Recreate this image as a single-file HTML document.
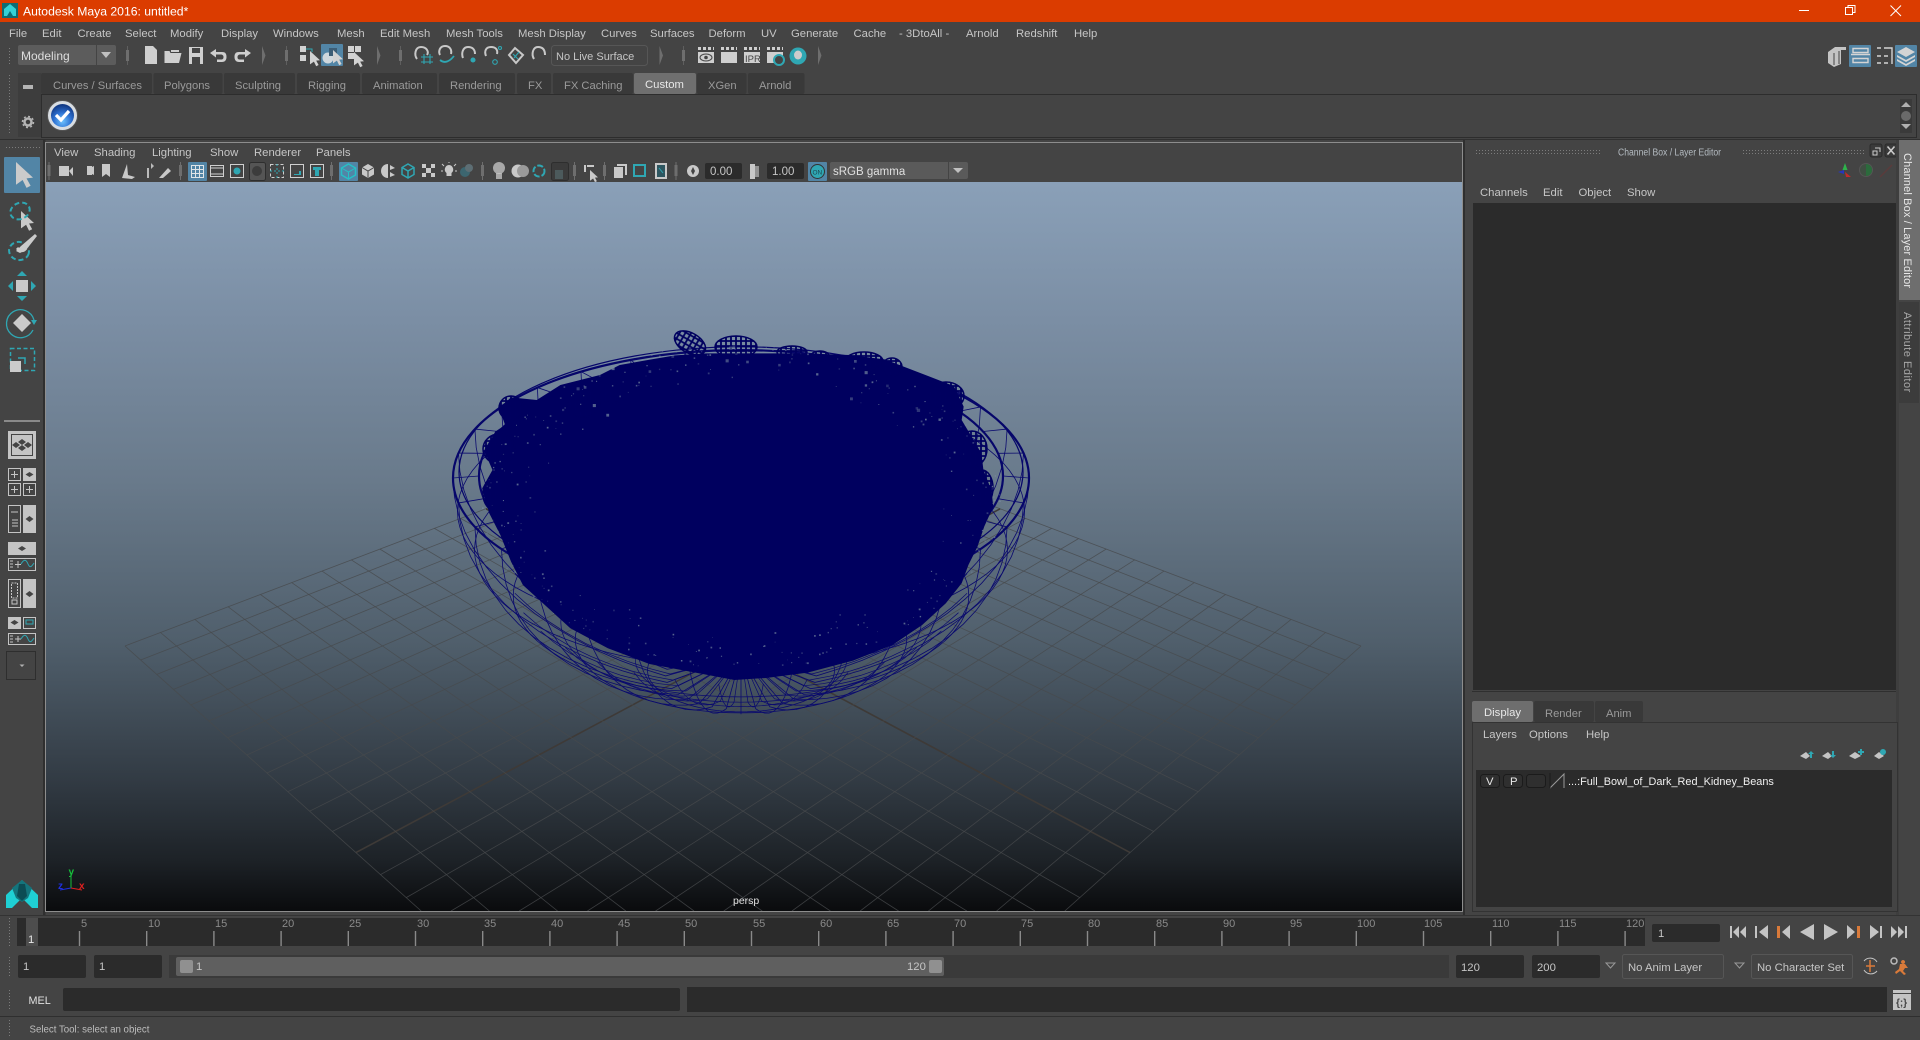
<!DOCTYPE html>
<html lang="en"><head><meta charset="utf-8"><title>Autodesk Maya 2016: untitled*</title>
<style>
html,body{margin:0;padding:0;background:#444;width:1920px;height:1040px;overflow:hidden}
svg{display:block}
text{font:11.3px "Liberation Sans",sans-serif;fill:#c6c6c6}
.d{fill:#9a9a9a;font-size:11.200px}
.n{fill:#8a8a8a;font-size:11px}
.w{fill:#e8e8e8}
</style></head><body>
<svg xmlns="http://www.w3.org/2000/svg" width="1920" height="1040" viewBox="0 0 1920 1040">
<defs>
<linearGradient id="sky" gradientUnits="userSpaceOnUse" x1="0" y1="182" x2="0" y2="911">
<stop offset="0" stop-color="#8aa0b8"/><stop offset=".19" stop-color="#7b8ea4"/><stop offset=".41" stop-color="#697a8b"/><stop offset=".63" stop-color="#505f6c"/><stop offset=".82" stop-color="#323b44"/><stop offset=".93" stop-color="#1d2227"/><stop offset="1" stop-color="#0a0b0d"/>
</linearGradient>
<pattern id="dots" width="3" height="3" patternUnits="userSpaceOnUse"><rect width="1" height="1" fill="#7c7c7c"/></pattern>
<pattern id="hatch" width="5" height="5" patternUnits="userSpaceOnUse"><path d="M0 1H5M1 0V5" stroke="#00005f" stroke-width="1.800"/></pattern>
<radialGradient id="chk" cx=".5" cy=".75" r=".7"><stop offset="0" stop-color="#6ec2ff"/><stop offset=".55" stop-color="#2c6fd0"/><stop offset="1" stop-color="#123a86"/></radialGradient>
<clipPath id="vp"><rect x="46" y="182" width="1416" height="729"/></clipPath>
<path id="arw" d="M0 0L10 9.2 6.2 9.6 8.6 14 6.2 15.2 3.9 10.6 0 13.4Z"/>
</defs>

<rect width="1920" height="1040" fill="#444"/>
<!-- title -->
<rect width="1920" height="22" fill="#db3c00"/>
<rect x="2" y="3" width="16" height="15" fill="#0d6d74"/><path d="M4 16V9L10 4 16 9V16H13L10 11 7 16Z" fill="#35d2d6"/>
<text x="23" y="15.500" style="font-size:12.200px;fill:#fff">Autodesk Maya 2016: untitled*</text>
<path d="M1799 10.500H1809" stroke="#fff"/><path d="M1845.500 7.500h7v7h-7zM1848 7.500v-2h7v7h-2.500" fill="none" stroke="#fff"/><path d="M1890.500 5.500l10.500 10.500M1901 5.500l-10.500 10.500" stroke="#fff"/>

<!-- menu -->
<g>
<text x="9" y="37">File</text><text x="42" y="37">Edit</text><text x="77.500" y="37">Create</text><text x="125" y="37">Select</text><text x="170" y="37">Modify</text><text x="221" y="37">Display</text><text x="273" y="37">Windows</text><text x="337" y="37">Mesh</text><text x="380" y="37">Edit Mesh</text><text x="446" y="37">Mesh Tools</text><text x="518" y="37">Mesh Display</text><text x="601" y="37">Curves</text><text x="650" y="37">Surfaces</text><text x="708.500" y="37">Deform</text><text x="761" y="37">UV</text><text x="791" y="37">Generate</text><text x="853.500" y="37">Cache</text><text x="899" y="37">- 3DtoAll -</text><text x="966" y="37">Arnold</text><text x="1016" y="37">Redshift</text><text x="1074" y="37">Help</text>
</g>

<!-- status toolbar -->
<rect x="7" y="46" width="5" height="20" fill="url(#dots)"/>
<rect x="18" y="45" width="98" height="20" rx="2" fill="#5c5c5c"/><rect x="96" y="45" width="1" height="20" fill="#444"/>
<text x="21" y="60" style="font-size:12px;fill:#ddd">Modeling</text><path d="M101 52h10l-5 6z" fill="#c0c0c0"/>
<g fill="#5f5f5f"><rect x="127" y="46" width="1" height="19"/><rect x="286" y="46" width="1" height="19"/><rect x="400" y="46" width="1" height="19"/><rect x="683" y="46" width="1" height="19"/>
<rect x="126" y="50" width="3" height="11" fill="#6e6e6e"/><rect x="285" y="50" width="3" height="11" fill="#6e6e6e"/><rect x="399" y="50" width="3" height="11" fill="#6e6e6e"/><rect x="682" y="50" width="3" height="11" fill="#6e6e6e"/>
<path d="M262 46l3.500 9.500-3.500 9.500zM377 46l3.500 9.500-3.500 9.500zM659.500 46l3.500 9.500-3.500 9.500zM818 46l3.500 9.500-3.500 9.500z" fill="#6e6e6e"/></g>
<g fill="#cfcfcf">
<path d="M145 46h8l4 4v14h-12z"/>
<path d="M164.500 51h5l1 2h11l-2.500 10h-14.500zM171 50h8v2h-8z"/>
<path d="M189 47h14v17h-14zM192 48v5h8v-5zM192 57v7h8v-7z" fill-rule="evenodd"/><rect x="197" y="59" width="2" height="3" fill="#444"/>
<path d="M216 49v3h6c4 0 4.500 2.500 4.500 5 0 3-1.500 5-4.500 5h-5v-2.500h4c2 0 2.500-1 2.500-2.500s-1-2.500-3-2.500h-4.500v3l-6-4.500z"/>
<path d="M245 49v3h-6c-4 0-4.500 2.500-4.500 5 0 3 1.500 5 4.500 5h5v-2.500h-4c-2 0-2.500-1-2.500-2.500s1-2.500 3-2.500h4.500v3l6-4.500z"/>
</g>
<!-- select mode -->
<rect x="321" y="44" width="22" height="22" rx="1" fill="#5285a6"/>
<g fill="#d2d2d2">
<rect x="300" y="46" width="6" height="6"/><rect x="300" y="55" width="6" height="6"/><use href="#arw" x="310" y="51"/>
<circle cx="328" cy="58" r="5.500" fill="#cfd7dc"/><path d="M329 48h8v8h-8z" fill="#3d5e76"/><use href="#arw" x="333" y="50"/>
<path d="M348 46h6v6h-6zM355 46h6v6h-6zM348 53h6v6h-6z"/><use href="#arw" x="354" y="52"/>
</g>
<path d="M306 49h6v3" fill="none" stroke="#2fa7b3"/>
<!-- snap icons -->
<g fill="none" stroke="#c8c8c8" stroke-width="2">
<path d="M417 59c-3-4-2-12 4-12s8 5 6 8"/><path d="M440 55c-2-4 0-9 5-9s7 4 6 8"/><path d="M463 58c-2-5 0-11 5-11s7 3 7 7"/><path d="M486 56c-2-5 0-9 5-9s7 3 6 7"/><path d="M509 55l6-7 8 7-7 8z"/><path d="M534 59c-3-5-1-12 4-12s7 3 7 8"/>
</g>
<g fill="none" stroke="#2fa7b3" stroke-width="1.100">
<path d="M424 54v10M430 54v10M421 57h12M421 62h12"/><path d="M440 60c5 4 10 1 14-4" stroke-width="1.800"/><circle cx="473" cy="60" r="2" fill="#2fa7b3"/><circle cx="495" cy="62" r="2.300"/><circle cx="500" cy="48" r="1.500"/><path d="M513 54l5 5M519 52l-5 6"/>
</g>
<rect x="551.500" y="45.500" width="96" height="20" rx="3" fill="#444" stroke="#565656"/>
<text x="556" y="60" style="font-size:11px">No Live Surface</text>
<!-- render -->
<g fill="#cfcfcf">
<rect x="698" y="52" width="16" height="11"/><rect x="721" y="52" width="16" height="11"/><rect x="744" y="52" width="16" height="11"/><rect x="767" y="52" width="16" height="11"/>
<path d="M698 47h3v3h-3zM703 47h3v3h-3zM708 47h3v3h-3zM713 47h1v3h-1zM721 47h3v3h-3zM726 47h3v3h-3zM731 47h3v3h-3zM736 47h1v3h-1zM744 47h3v3h-3zM749 47h3v3h-3zM754 47h3v3h-3zM759 47h1v3h-1zM767 47h3v3h-3zM772 47h3v3h-3zM777 47h3v3h-3zM782 47h1v3h-1z"/>
</g>
<ellipse cx="706" cy="57.500" rx="6" ry="3.500" fill="none" stroke="#444"/><circle cx="706" cy="57.500" r="1.800" fill="#444"/>
<text x="745" y="62" style="font-size:9.500px;fill:#444">IPR</text>
<circle cx="779" cy="60" r="5" fill="#444" stroke="#2fa7b3" stroke-width="2"/>
<circle cx="798" cy="56" r="8.500" fill="#2fa7b3"/><ellipse cx="798" cy="55" rx="4" ry="4.500" fill="#ccc"/>
<!-- right status icons -->
<rect x="1849" y="45" width="22" height="22" rx="1" fill="#5285a6"/><rect x="1895" y="45" width="22" height="22" rx="1" fill="#5285a6"/>
<path d="M1828 52l7-5h11v3h-5v14l-7 3-6-4z" fill="#c4c4c4"/><path d="M1834 53v12M1839 51v13" stroke="#444"/>
<g fill="none" stroke="#d4d4d4" stroke-width="1.400"><path d="M1853 48.500h15v4h-15zM1853 58.500h15v4h-15zM1851 54.500h19"/><path d="M1877 48h4M1877 56h4M1877 63h4M1884 48h8v16M1884 56h4M1884 63h4"/></g>
<path d="M1906 47l9 5-9 5-9-5zM1897 55l9 5 9-5v2l-9 5-9-5zM1897 59l9 5 9-5v2l-9 5-9-5z" fill="#d4d4d4"/>

<!-- shelf -->
<rect x="7" y="74" width="5" height="60" fill="url(#dots)"/>
<rect x="18" y="73" width="23" height="64" fill="#3d3d3d"/>
<rect x="23" y="85" width="10" height="4" fill="#b4b4b4"/>
<circle cx="28" cy="122" r="3.500" fill="none" stroke="#b4b4b4" stroke-width="2.500"/><circle cx="28" cy="122" r="5.500" fill="none" stroke="#b4b4b4" stroke-width="1.500" stroke-dasharray="2 2.300"/>
<g fill="#393939">
<rect x="41" y="73" width="111" height="21" rx="2"/><rect x="153.500" y="73" width="69" height="21" rx="2"/><rect x="224" y="73" width="71" height="21" rx="2"/><rect x="297" y="73" width="63" height="21" rx="2"/><rect x="362" y="73" width="75" height="21" rx="2"/><rect x="439" y="73" width="76" height="21" rx="2"/><rect x="517" y="73" width="34" height="21" rx="2"/><rect x="553" y="73" width="80" height="21" rx="2"/><rect x="697" y="73" width="49.500" height="21" rx="2"/><rect x="748" y="73" width="56.500" height="21" rx="2"/>
</g>
<rect x="634" y="73" width="62" height="21" rx="2" fill="#6f6f6f"/>
<g class="g">
<text class="d" x="53" y="89">Curves / Surfaces</text><text class="d" x="164" y="89">Polygons</text><text class="d" x="235" y="89">Sculpting</text><text class="d" x="308" y="89">Rigging</text><text class="d" x="373" y="89">Animation</text><text class="d" x="450" y="89">Rendering</text><text class="d" x="528" y="89">FX</text><text class="d" x="564" y="89">FX Caching</text><text class="w" x="645" y="88">Custom</text><text class="d" x="708" y="89">XGen</text><text class="d" x="759" y="89">Arnold</text>
</g>
<rect x="41.500" y="94.500" width="1875" height="43" fill="#444" stroke="#2d2d2d"/>
<circle cx="62.500" cy="115.500" r="15" fill="#d8dde2" stroke="#555"/><circle cx="62.500" cy="115.500" r="11.500" fill="url(#chk)"/><path d="M56 115l5 5 8-9" fill="none" stroke="#fff" stroke-width="3.200"/>
<rect x="1900" y="99" width="12" height="34" fill="#3a3a3a"/><path d="M1901 107l5-5 5 5zM1901 124l5 5 5-5z" fill="#b0b0b0"/><circle cx="1906" cy="116" r="5" fill="#6a6a6a"/>
<rect x="0" y="139" width="1920" height="1" fill="#303030"/>

<!-- left tools -->
<rect x="4" y="147" width="36" height="1" fill="url(#dots)"/><rect x="4" y="149" width="36" height="1" fill="url(#dots)"/>
<rect x="43" y="140" width="2.500" height="775" fill="#2f2f2f"/>
<rect x="4" y="157" width="36" height="36" rx="1" fill="#5285a6"/>
<use href="#arw" x="0" y="0" transform="translate(16 162) scale(1.700)" fill="#cbcbcb"/>
<use href="#arw" transform="translate(21 211) scale(1.300)" fill="#c9c9c9"/>
<g fill="none" stroke="#2fa7b3" stroke-width="2" stroke-dasharray="5 3">
<ellipse cx="20" cy="211" rx="10" ry="8" transform="rotate(-25 20 211)"/>
<ellipse cx="19" cy="251" rx="10" ry="9" transform="rotate(15 19 251)"/>
<rect x="10.500" y="348.500" width="24" height="22" stroke-dasharray="4 2.500" stroke-width="1.500"/>
</g>
<path d="M35 234l2 2-11 14-6 3-4-2 5-5z" fill="#cbcbcb"/><path d="M17 248c4 4 7 3 9 0" stroke="#cbcbcb" stroke-width="3" fill="none"/>
<rect x="16" y="280" width="12" height="12" fill="#c9c9c9"/><g fill="#2fa7b3"><path d="M22 271l5 5h-10zM22 301l5-5h-10zM8 286l5-5v10zM36 286l-5-5v10z"/></g>
<path d="M22 314l9 9-9 9-9-9z" fill="#cbcbcb"/><path d="M33 330a14 14 0 1 1 1-10" fill="none" stroke="#2fa7b3" stroke-width="1.300"/><path d="M31 320h6l-3 5z" fill="#2fa7b3"/>
<rect x="10" y="361" width="11" height="11" fill="#cbcbcb"/><path d="M18 358h7v6" fill="none" stroke="#2fa7b3" stroke-width="1.500"/>
<rect x="4" y="420" width="36" height="2" fill="#8a8a8a"/>
<rect x="8" y="431" width="28" height="28" fill="#c4c4c4"/><rect x="11.500" y="434.500" width="21" height="21" fill="none" stroke="#444"/>
<path d="M22 439l4 3-4 3-4-3zM22 445l4 3-4 3-4-3zM16 442l4 3-4 3-4-3zM28 442l4 3-4 3-4-3z" fill="#444"/>
<g fill="none" stroke="#c4c4c4"><rect x="8.500" y="468.500" width="12" height="12"/><rect x="8.500" y="483.500" width="12" height="12"/><rect x="23.500" y="483.500" width="12" height="12"/><path d="M11 474.500h7M14.500 471v7M11 489.500h7M14.500 486v7M26 489.500h7M29.500 486v7"/><rect x="8.500" y="505.500" width="12" height="27"/><path d="M11 512h7M12 520h6M12 523h6M12 526h6"/><rect x="8.500" y="558.500" width="27" height="12"/><path d="M10 561h3M10 564h3M10 567h3M15 564.500h6M18 561v7"/><rect x="8.500" y="579.500" width="12" height="28"/><rect x="11.500" y="583" width="6" height="15" fill="none" stroke-dasharray="2 1"/><rect x="12" y="600" width="5" height="4"/><rect x="23.500" y="617.500" width="12" height="11"/><rect x="8.500" y="633.500" width="27" height="11"/><path d="M10 636h3M10 639h3M10 642h3M15 639h6M18 636v6"/></g>
<path d="M21 564c3-5 5-5 7 0s4 2 6-1M21 639c3-5 5-5 7 0s4 2 6-1" fill="none" stroke="#2fa7b3"/>
<rect x="26" y="620" width="7" height="4" fill="none" stroke="#2fa7b3"/>
<g fill="#c4c4c4"><rect x="23" y="468" width="13" height="13"/><rect x="23" y="505" width="13" height="28"/><rect x="8" y="542" width="28" height="13"/><rect x="23" y="579" width="13" height="29"/><rect x="8" y="617" width="13" height="12"/></g>
<path d="M29.500 472l4 2.500-4 2.500-4-2.500zM29.500 516l4 3-4 3-4-3zM22 546l4 2.500-4 2.500-4-2.500zM29.500 591l4 3-4 3-4-3zM14.500 620l4 2.500-4 2.500-4-2.500z" fill="#444"/>
<rect x="6.500" y="651.500" width="29" height="28" fill="none" stroke="#2e2e2e"/><path d="M19.500 664.500h5l-2.500 2.500z" fill="#b0b0b0"/>
<!-- Maya logo -->
<path d="M6 895l16-15 16 15v13h-6l-10-10-10 10h-6z" fill="#1fd0d4"/><path d="M12 888l10-8 10 8-4 10-6 4-6-4z" fill="#14747c"/><path d="M19 884h6l2 12-5 5-5-5z" fill="#0c4c54"/>

<!-- viewport panel -->
<rect x="45.500" y="142.500" width="1417" height="769" fill="#444" stroke="#8d8d8d"/>
<text x="54" y="156">View</text><text x="94" y="156">Shading</text><text x="152" y="156">Lighting</text><text x="210" y="156">Show</text><text x="254" y="156">Renderer</text><text x="316" y="156">Panels</text>
<g fill="#6e6e6e"><rect x="48.500" y="162" width="1" height="18"/><rect x="180" y="162" width="1" height="18"/><rect x="331" y="162" width="1" height="18"/><rect x="482" y="162" width="1" height="18"/><rect x="574" y="162" width="1" height="18"/><rect x="604" y="162" width="1" height="18"/><rect x="675.500" y="162" width="1" height="18"/>
<rect x="47.500" y="165" width="3" height="11"/><rect x="179" y="165" width="3" height="11"/><rect x="330" y="165" width="3" height="11"/><rect x="481" y="165" width="3" height="11"/><rect x="573" y="165" width="3" height="11"/><rect x="603" y="165" width="3" height="11"/><rect x="674.500" y="165" width="3" height="11"/></g>
<rect x="188" y="162" width="19" height="19" rx="1" fill="#5285a6"/><rect x="339" y="162" width="19" height="19" rx="1" fill="#5285a6"/><rect x="808" y="162" width="19" height="19" rx="1" fill="#5285a6"/>
<rect x="249.500" y="162.500" width="16" height="18" rx="2" fill="#555" stroke="#2e2e2e"/><rect x="551.500" y="162.500" width="17" height="18" rx="2" fill="#3b3b3b" stroke="#2e2e2e"/>
<g fill="#c9c9c9">
<rect x="59" y="166" width="10" height="10"/><path d="M69 171l4-4v9z"/>
<rect x="87" y="166" width="5" height="9"/><path d="M92 167l2-1v9l-2-1z"/>
<path d="M102 164h8v13l-4-3-4 3z"/>
<path d="M122 178l5-14 1 11 7 2-3 2z"/>
<path d="M151 163l3 3-3 3zM147 168h2v10h-2z" opacity=".9"/>
<path d="M159 178l9-10 3 3-8 7z"/>
<path d="M368 164l6 3.500v7l-6 3.500-6-3.500v-7z"/><path d="M388 164a7 7 0 0 0 0 14z"/><path d="M390 165l5 3-5 2zM390 172l5 3-5 2z"/>
<path d="M422 164h4v4h-4zM431 164h4v4h-4zM426 168h5v5h-5zM422 173h4v4h-4zM431 173h4v4h-4z"/>
<path d="M449 165a4.500 4.500 0 0 1 2.500 8v3h-5v-3a4.500 4.500 0 0 1 2.500-8z"/><path d="M443 171h-2M457 171h-2M444 166l-2-2M454 166l2-2M449 163v-1" stroke="#c9c9c9"/>
<circle cx="499" cy="168" r="6" opacity=".75"/><rect x="496" y="173" width="6" height="6" opacity=".75"/><circle cx="518" cy="171" r="6.500"/><circle cx="523" cy="171" r="6" fill="#9a9a9a"/>
<path d="M587 165h7v2h-7zM584 165h2v7h-2z"/><use href="#arw" transform="translate(590 170) scale(.8)"/>
<path d="M614 167h9v11h-9zM617 164h10v11h-2v-9h-8z" fill-rule="evenodd"/>
<rect x="655" y="163" width="12" height="16"/><path d="M750 164h5v15h-5z"/><path d="M755 166h4v11h-4z" opacity=".6"/>
<circle cx="693" cy="171" r="6"/>
</g>
<path d="M368 170.500v7M362 167.500l6 3.500 6-3.500" fill="none" stroke="#444"/>
<rect x="634" y="165" width="11" height="11" fill="none" stroke="#2fa7b3" stroke-width="2"/><rect x="657" y="165" width="8" height="12" fill="#2e5660"/><path d="M659 168l4 5" stroke="#2fa7b3"/>
<path d="M693 167l2 4-2 4-2-4z" fill="#444"/>
<g fill="none" stroke="#dfe5e8"><rect x="191.500" y="165.500" width="12" height="12"/><path d="M195.500 165v13M199.500 165v13M191 169.500h13M191 173.500h13"/></g>
<g fill="none" stroke="#cfcfcf"><rect x="210.500" y="165.500" width="13" height="11"/><path d="M211 168h12M211 174h12"/><rect x="230.500" y="164.500" width="13" height="13"/><rect x="270.500" y="164.500" width="13" height="13" stroke-dasharray="3 2"/><path d="M270 171h14M277 164v14" stroke="#2fa7b3" stroke-dasharray="2 2"/><rect x="290.500" y="164.500" width="13" height="13"/><rect x="310.500" y="164.500" width="13" height="13"/></g>
<circle cx="237" cy="171" r="3.500" fill="#2fa7b3"/><circle cx="257" cy="171" r="5" fill="#3c3c3c"/>
<path d="M294 174h5v-3h2v4h-7z" fill="#2fa7b3"/><path d="M313 167h8v3h-2v6h-4v-6h-2z" fill="#2fa7b3"/>
<path d="M348.500 164l7 4v7l-7 4-7-4v-7z" fill="none" stroke="#26c0c6" stroke-width="1.500"/><path d="M341.500 168l7 4 7-4M348.500 172v7" fill="none" stroke="#26c0c6"/>
<path d="M408 164l6 3.500v7l-6 3.500-6-3.500v-7zM402 167.500l6 3.500 6-3.500M408 171v7" fill="none" stroke="#2fa7b3" stroke-width="1.500"/>
<circle cx="465" cy="172" r="5" fill="#3c6670"/><circle cx="469" cy="168" r="4" fill="#5d6e74"/>
<circle cx="539" cy="171" r="5.500" fill="none" stroke="#2fa7b3" stroke-width="2" stroke-dasharray="6 2"/>
<rect x="555" y="170" width="8" height="9" fill="#4c5a5c"/>
<rect x="705" y="163" width="37" height="16" rx="2" fill="#2b2b2b"/><text x="710" y="175" style="font-size:11.500px">0.00</text>
<rect x="767" y="163" width="37" height="16" rx="2" fill="#2b2b2b"/><text x="772" y="175" style="font-size:11.500px">1.00</text>
<circle cx="817.500" cy="171.500" r="7" fill="#2fa7b3" stroke="#333"/><text x="812.500" y="174.500" style="font-size:6.500px;fill:#1d4752">ON</text>
<rect x="830" y="162" width="138" height="17" rx="2" fill="#5a5a5a"/><rect x="948" y="162" width="1" height="17" fill="#444"/>
<text x="833" y="175" style="font-size:11.500px;fill:#e0e0e0">sRGB gamma</text><path d="M953 168h10l-5 5z" fill="#c0c0c0"/>

<!-- 3D view -->
<rect x="46" y="182" width="1416" height="729" fill="url(#sky)"/>
<g clip-path="url(#vp)">
<g id="grid" fill="none"></g>
<g id="wire" fill="none"></g>
<g transform="translate(430 320) scale(.3953 .3333)">
<path fill="#00005f" d="M560 118L620 106 700 100 830 100 950 100 1060 105 1150 118 1260 168 1325 198 1350 260 1345 300 1370 350 1395 400 1400 450 1420 510 1425 560 1402 620 1385 680 1362 735 1345 790 1305 850 1245 915 1170 975 1070 1022 955 1058 850 1074 770 1080 680 1060 555 1032 450 985 355 925 295 860 235 795 205 725 178 645 150 580 132 505 158 450 138 395 165 335 190 315 175 265 205 232 270 240 330 195 430 165 480 135Z"/>
</g>
<g id="beans" fill="url(#hatch)" stroke="#00005f" stroke-width="1.500">
<ellipse cx="690" cy="343" rx="17" ry="10" transform="rotate(30 690 343)"/>
<ellipse cx="736" cy="347" rx="21" ry="11"/>
<ellipse cx="792" cy="352" rx="15" ry="6"/>
<ellipse cx="820" cy="356" rx="9" ry="5"/>
<ellipse cx="864" cy="361" rx="19" ry="9"/>
<ellipse cx="892" cy="367" rx="10" ry="9"/>
<ellipse cx="946" cy="396" rx="18" ry="14"/>
<ellipse cx="972" cy="449" rx="15" ry="18"/>
<ellipse cx="499" cy="449" rx="16" ry="15"/>
<ellipse cx="511" cy="408" rx="12" ry="12"/>
<ellipse cx="584" cy="403" rx="16" ry="14"/>
<ellipse cx="612" cy="393" rx="12" ry="10"/>
<ellipse cx="982" cy="488" rx="11" ry="18"/>
<ellipse cx="496" cy="494" rx="13" ry="17"/>
</g>
<g id="spk" fill="#7a8da3"></g>
<g transform="translate(71 888)"><path d="M0 0V-15" stroke="#16c03a"/><path d="M0 0L11 2" stroke="#e02020"/><path d="M0 0L-11 2" stroke="#2030e0"/></g>
<text x="68.500" y="875" style="font-size:10px;fill:#16c03a;font-weight:bold">y</text><text x="79" y="889" style="font-size:10px;fill:#e02020;font-weight:bold">x</text><text x="58" y="889" style="font-size:10px;fill:#2030e0;font-weight:bold">z</text>
<text x="733" y="904" style="font-size:10.500px;fill:#e0e0e0">persp</text>
</g>

<!-- right panel -->
<rect x="1463" y="140" width="2" height="775" fill="#2f2f2f"/>
<rect x="1474" y="150" width="127" height="1" fill="url(#dots)"/><rect x="1474" y="153" width="127" height="1" fill="url(#dots)"/><rect x="1741" y="150" width="125" height="1" fill="url(#dots)"/><rect x="1741" y="153" width="125" height="1" fill="url(#dots)"/>
<text x="1618" y="155.500" textLength="103" lengthAdjust="spacingAndGlyphs" style="font-size:10px;fill:#b5bcc2">Channel Box / Layer Editor</text>
<rect x="1870" y="144" width="12" height="13" rx="2" fill="#3a3a3a" stroke="#2a2a2a"/><rect x="1885" y="144" width="12" height="13" rx="2" fill="#3a3a3a" stroke="#2a2a2a"/>
<path d="M1873 151h4v4h-4zM1875 148h5v4" fill="none" stroke="#ccc"/><path d="M1887.500 146.500l7 8M1894.500 146.500l-7 8" stroke="#ccc" stroke-width="1.600"/>
<path d="M1845 163l2.500 7h-5z" fill="#2eb34b"/><path d="M1838 172l6-2v4z" fill="#2636c0"/><path d="M1845 172l6 5-5 0z" fill="#c42a2a"/>
<circle cx="1866" cy="170" r="6.500" fill="#3f4f42" stroke="#555"/><path d="M1866 164a6 6 0 0 1 0 12z" fill="#2b6b3c"/>
<path d="M1880 177l12-12" stroke="#5a3b3b" stroke-width="1.500"/>
<text x="1480" y="196">Channels</text><text x="1543" y="196">Edit</text><text x="1578.500" y="196">Object</text><text x="1627" y="196">Show</text>
<rect x="1473" y="203" width="423" height="487" fill="#2b2b2b"/>
<rect x="1472" y="691" width="426" height="1" fill="#2f2f2f"/>
<rect x="1899" y="140" width="21" height="160" fill="#6e6e6e"/><rect x="1899" y="302" width="20" height="101" fill="#3c3c3c"/>
<rect x="1896" y="140" width="3" height="775" fill="#3e3e3e"/>
<text transform="translate(1904 153) rotate(90)" textLength="135" style="font-size:11px;fill:#e8e8e8">Channel Box / Layer Editor</text>
<text transform="translate(1904 312) rotate(90)" style="font-size:11px;letter-spacing:.5px;fill:#a8a8a8">Attribute Editor</text>
<rect x="1472" y="701" width="61" height="21" rx="2" fill="#6e6e6e"/><rect x="1534" y="701" width="60" height="21" rx="2" fill="#393939"/><rect x="1595" y="701" width="48" height="21" rx="2" fill="#393939"/>
<text class="w" x="1484" y="716">Display</text><text class="d" x="1545" y="717">Render</text><text class="d" x="1606" y="717">Anim</text>
<rect x="1472.500" y="722.500" width="425" height="189" fill="#444" stroke="#333"/>
<text x="1483" y="738">Layers</text><text x="1529" y="738">Options</text><text x="1586" y="738">Help</text>
<g fill="#c4c4c4"><path d="M1800 756l6-4 4 4-4 3zM1822 756l6-4 4 4-4 3zM1849 756l6-4 6 4-6 3zM1874 756l5-4 5 4-5 3z"/></g>
<g fill="#2fa7b3"><path d="M1811 751l3 3h-2v4h-2v-4h-2zM1833 758l3-3h-2v-4h-2v4h-2z"/><path d="M1860 749h2v2h2v2h-2v2h-2v-2h-2v-2h2z"/><circle cx="1883" cy="752" r="3"/></g>
<rect x="1476" y="770" width="416" height="137" fill="#2b2b2b"/>
<g fill="#2f2f2f" stroke="#1b1b1b"><rect x="1480.500" y="774.500" width="19" height="13" rx="3"/><rect x="1503.500" y="774.500" width="19" height="13" rx="3"/><rect x="1526.500" y="774.500" width="19" height="13" rx="3"/></g>
<text class="w" x="1486" y="785">V</text><text class="w" x="1510" y="785">P</text>
<path d="M1550 788l14-14v14" fill="none" stroke="#9a9a9a"/><rect x="1549.500" y="773" width="1" height="15" fill="#1b1b1b"/>
<text x="1568" y="785" style="font-size:10.900px;fill:#f0f0f0">...:Full_Bowl_of_Dark_Red_Kidney_Beans</text>

<!-- timeline -->
<rect x="0" y="915" width="1920" height="1" fill="#333"/>
<rect x="7" y="918" width="5" height="28" fill="url(#dots)"/>
<rect x="17" y="918" width="1628" height="28" fill="#2b2b2b"/><rect x="26" y="918" width="12" height="28" fill="#4d4d4d"/>
<path stroke="#8a8a8a" stroke-width="1.400" d="M79.500 931V946M146.700 931V946M213.900 931V946M281.100 931V946M348.300 931V946M415.500 931V946M482.700 931V946M549.900 931V946M617.100 931V946M684.300 931V946M751.500 931V946M818.700 931V946M885.900 931V946M953.100 931V946M1020.300 931V946M1087.500 931V946M1154.700 931V946M1221.900 931V946M1289.100 931V946M1356.300 931V946M1423.500 931V946M1490.700 931V946M1557.900 931V946M1625.100 931V946"/>
<text x="28" y="943" class="w">1</text>
<text class="n" x="81" y="927">5</text><text class="n" x="148" y="927">10</text><text class="n" x="215" y="927">15</text><text class="n" x="282" y="927">20</text><text class="n" x="349" y="927">25</text><text class="n" x="417" y="927">30</text><text class="n" x="484" y="927">35</text><text class="n" x="551" y="927">40</text><text class="n" x="618" y="927">45</text><text class="n" x="685" y="927">50</text><text class="n" x="753" y="927">55</text><text class="n" x="820" y="927">60</text><text class="n" x="887" y="927">65</text><text class="n" x="954" y="927">70</text><text class="n" x="1021" y="927">75</text><text class="n" x="1088" y="927">80</text><text class="n" x="1156" y="927">85</text><text class="n" x="1223" y="927">90</text><text class="n" x="1290" y="927">95</text><text class="n" x="1357" y="927">100</text><text class="n" x="1424" y="927">105</text><text class="n" x="1492" y="927">110</text><text class="n" x="1559" y="927">115</text><text class="n" x="1626" y="927">120</text>
<rect x="1652" y="924" width="68" height="18" rx="2" fill="#2b2b2b"/><text x="1658" y="937">1</text>
<!-- playback -->
<g fill="#c4c4c4">
<rect x="1730" y="926" width="2" height="12"/><path d="M1739 926v12l-6-6zM1746 926v12l-6-6z"/>
<rect x="1755" y="926" width="2" height="12"/><path d="M1768 925v14l-9-7z"/>
<path d="M1790 925v14l-8-7z"/>
<path d="M1814 924v16l-14-8z"/>
<path d="M1824 924v16l14-8z"/>
<path d="M1847 925v14l8-7z"/>
<path d="M1870 925v14l9-7z"/><rect x="1880" y="926" width="2" height="12"/>
<path d="M1891 926v12l6-6zM1898 926v12l6-6z"/><rect x="1905" y="926" width="2" height="12"/>
</g>
<rect x="1777" y="926" width="3" height="12" fill="#d97a3a"/><rect x="1857" y="926" width="3" height="12" fill="#d97a3a"/>
<!-- range -->
<rect x="7" y="955" width="5" height="23" fill="url(#dots)"/>
<rect x="18" y="955" width="68" height="23" rx="2" fill="#2b2b2b"/><rect x="94" y="955" width="68" height="23" rx="2" fill="#2b2b2b"/>
<text x="23" y="970">1</text><text x="99" y="970">1</text>
<rect x="169" y="955" width="1280" height="23" fill="#3a3a3a"/>
<rect x="176" y="957" width="768" height="19" rx="2" fill="#5f5f5f"/>
<rect x="180" y="960" width="13" height="13" rx="2" fill="#909090"/><rect x="929" y="960" width="13" height="13" rx="2" fill="#909090"/>
<text x="196" y="970">1</text><text x="907" y="970">120</text>
<rect x="1456" y="955" width="68" height="23" rx="2" fill="#2b2b2b"/><rect x="1532" y="955" width="68" height="23" rx="2" fill="#2b2b2b"/>
<text x="1461" y="971">120</text><text x="1537" y="971">200</text>
<path d="M1606 963h9l-4.500 5z" fill="none" stroke="#999"/><path d="M1735 963h9l-4.500 5z" fill="none" stroke="#999"/>
<rect x="1622.500" y="954.500" width="101" height="24" rx="2" fill="#444" stroke="#565656"/><rect x="1751.500" y="954.500" width="101" height="24" rx="2" fill="#444" stroke="#565656"/>
<text x="1628" y="971">No Anim Layer</text><text x="1757" y="971">No Character Set</text>
<path d="M1864 961a8 8 0 0 1 13 1M1877 971a8 8 0 0 1-13-1" fill="none" stroke="#c4c4c4"/><path d="M1870 960v12M1866 966h9" stroke="#d97a3a" stroke-width="1.500"/>
<circle cx="1894" cy="961" r="3" fill="none" stroke="#bbb" stroke-width="1.500"/>
<path d="M1903 960a2 2 0 1 0 .1 0zM1900 964l5 0 3 4 -3 0 -2 3 3 3-2 1-4-4-4 3-1-2 4-3z" fill="#d97a3a"/>
<!-- MEL -->
<rect x="7" y="988" width="5" height="23" fill="url(#dots)"/>
<text x="28.500" y="1004" style="font-size:10.800px;fill:#e0e0e0">MEL</text>
<rect x="63" y="988" width="617" height="23" rx="2" fill="#2b2b2b"/><rect x="687" y="987" width="1200" height="25" fill="#2b2b2b"/>
<rect x="1893" y="990" width="18" height="20" fill="#c4c4c4"/><rect x="1893" y="993" width="18" height="1" fill="#444"/>
<text x="1896" y="1006" style="font-size:10px;fill:#444;font-weight:bold">{;}</text>
<rect x="0" y="1016" width="1920" height="1" fill="#2f2f2f"/>
<rect x="7" y="1020" width="5" height="16" fill="url(#dots)"/>
<text x="29.500" y="1032.500" style="font-size:9.700px;fill:#bdbdbd">Select Tool: select an object</text>
</svg>
<script>
(function(){
var NS='http://www.w3.org/2000/svg';
function el(p,n,a){var e=document.createElementNS(NS,n);for(var k in a)e.setAttribute(k,a[k]);p.appendChild(e);return e;}
/* floor grid: projective mapping of a 24x24 cell square, clamped to the viewport */
function G(u,v){var w=1-0.2018*(u+v);return[743+309*(u-v)/w,646+164.9*(u+v)/w];}
var g=document.getElementById('grid'),YM=911;
function L(a,b,ax){
 if(a[1]>YM&&b[1]>YM)return;
 if(b[1]>YM){var f=(YM-a[1])/(b[1]-a[1]);b=[a[0]+(b[0]-a[0])*f,YM];}
 else if(a[1]>YM){var f2=(YM-b[1])/(a[1]-b[1]);a=[b[0]+(a[0]-b[0])*f2,YM];}
 el(g,'line',{x1:a[0].toFixed(1),y1:a[1].toFixed(1),x2:b[0].toFixed(1),y2:b[1].toFixed(1),stroke:ax?'#3e3a37':'#474a4c','stroke-width':ax?1.6:0.8,'stroke-opacity':ax?1:0.8});
}
for(var k=-12;k<=12;k++){
 var t=k/12;
 L(G(t,-1),G(t,1),k==0);
 L(G(-1,t),G(1,t),k==0);
}
/* bowl wireframe: meridians stop at the last ring and fan to a point hidden behind the beans */
var W=document.getElementById('wire');
function B(r,D,cy,th,ph){var cs=Math.max(Math.cos(th),0),rr=r*Math.pow(cs,1.25),dd=D*Math.sin(th);return[741+rr*Math.cos(ph),cy+rr*Math.sin(ph)*0.444+dd*0.896];}
function shell(r,D,cy,N,rings,col,sw,off,from){
 var i,j,s;
 for(i=0;i<rings.length;i++){var th=rings[i]*Math.PI/180;s='';for(j=0;j<=96;j++){var p=B(r,D,cy,th,j/96*2*Math.PI);s+=(j?'L':'M')+p[0].toFixed(1)+' '+p[1].toFixed(1);}el(W,'path',{d:s,stroke:col,'stroke-width':sw});}
 for(j=0;j<N;j++){var ph=(j+off)/N*2*Math.PI;s='';for(i=from;i<=14;i++){var p2=B(r,D,cy,i/18*Math.PI/2,ph);s+=(i>from?'L':'M')+p2[0].toFixed(1)+' '+p2[1].toFixed(1);}s+='L741 655';el(W,'path',{d:s,stroke:col,'stroke-width':sw});}
}
shell(288,235,478,32,[0,9,20,34,50,66],'#0a0a6e',0.8,0,0);
shell(272,222,484,32,[44,62],'#0a0a6e',0.7,0.5,6);
/* thick rim */
function ring(a,cy,sw){el(W,'ellipse',{cx:741,cy:cy,rx:a,ry:a*0.444,stroke:'#06066a','stroke-width':sw});}
ring(288,478,2.2);ring(282,472,1.2);ring(262,476,2.2);
for(var m=0;m<32;m++){var ph=m/32*2*Math.PI,c1=Math.cos(ph),s1=Math.sin(ph);
 el(W,'line',{x1:741+288*c1,y1:478+127.9*s1,x2:741+262*c1,y2:476+116.3*s1,stroke:'#0a0a6e','stroke-width':0.8});}
/* speckled holes near the edge of the bean mass */
var S=document.getElementById('spk'),sd=12345;
function R(){sd=(sd*1103515245+12345)&0x7fffffff;return sd/0x7fffffff;}
for(var n=0;n<340;n++){
 var an=R()*2*Math.PI,rad=0.74+0.25*Math.sqrt(R()),x=741+rad*262*Math.cos(an),y=505+rad*165*Math.sin(an);
 var sz=0.7+R()*1.1;
 if(y<420&&R()<0.25)sz+=1.5;
 el(S,'rect',{x:x.toFixed(1),y:y.toFixed(1),width:sz.toFixed(1),height:sz.toFixed(1),opacity:(0.25+R()*0.5).toFixed(2)});
}
})();
</script>
</body></html>
